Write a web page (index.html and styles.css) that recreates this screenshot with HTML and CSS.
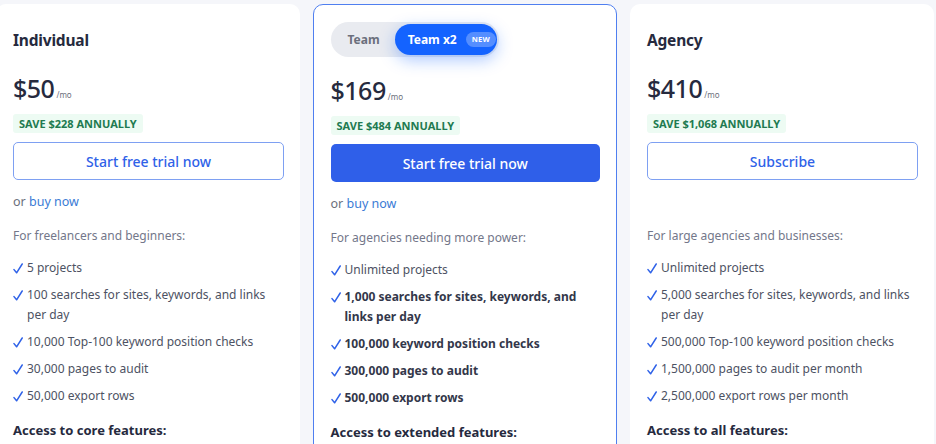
FILE: index.html
```html
<!DOCTYPE html>
<html>
<head>
<meta charset="utf-8">
<link rel="stylesheet" href="styles.css">
</head>
<body>
<div class="plans">
  <div class="card">
    <div class="head"><h2 class="title">Individual</h2></div>
    <div class="price"><span class="amount">$50</span><span class="per">/mo</span></div>
    <div class="save">SAVE $228 ANNUALLY</div>
    <a class="btn btn-outline">Start free trial now</a>
    <div class="or">or <a class="link">buy now</a></div>
    <p class="desc">For freelancers and beginners:</p>
    <ul class="list">
      <li><svg class="chk" viewBox="0 0 10 11"><path d="M1 6.6 L3.6 9.8 L9.2 1"/></svg><span>5 projects</span></li>
      <li><svg class="chk" viewBox="0 0 10 11"><path d="M1 6.6 L3.6 9.8 L9.2 1"/></svg><span>100 searches for sites, keywords, and links per day</span></li>
      <li><svg class="chk" viewBox="0 0 10 11"><path d="M1 6.6 L3.6 9.8 L9.2 1"/></svg><span>10,000 Top-100 keyword position checks</span></li>
      <li><svg class="chk" viewBox="0 0 10 11"><path d="M1 6.6 L3.6 9.8 L9.2 1"/></svg><span>30,000 pages to audit</span></li>
      <li><svg class="chk" viewBox="0 0 10 11"><path d="M1 6.6 L3.6 9.8 L9.2 1"/></svg><span>50,000 export rows</span></li>
    </ul>
    <div class="access">Access to core features:</div>
  </div>

  <div class="card card-featured">
    <div class="head">
      <div class="toggle">
        <span class="opt">Team</span>
        <span class="opt opt-active">Team x2 <span class="new">NEW</span></span>
      </div>
    </div>
    <div class="price"><span class="amount">$169</span><span class="per">/mo</span></div>
    <div class="save">SAVE $484 ANNUALLY</div>
    <a class="btn btn-solid">Start free trial now</a>
    <div class="or">or <a class="link">buy now</a></div>
    <p class="desc">For agencies needing more power:</p>
    <ul class="list">
      <li><svg class="chk" viewBox="0 0 10 11"><path d="M1 6.6 L3.6 9.8 L9.2 1"/></svg><span>Unlimited projects</span></li>
      <li class="strong"><svg class="chk" viewBox="0 0 10 11"><path d="M1 6.6 L3.6 9.8 L9.2 1"/></svg><span>1,000 searches for sites, keywords, and links per day</span></li>
      <li class="strong"><svg class="chk" viewBox="0 0 10 11"><path d="M1 6.6 L3.6 9.8 L9.2 1"/></svg><span>100,000 keyword position checks</span></li>
      <li class="strong"><svg class="chk" viewBox="0 0 10 11"><path d="M1 6.6 L3.6 9.8 L9.2 1"/></svg><span>300,000 pages to audit</span></li>
      <li class="strong"><svg class="chk" viewBox="0 0 10 11"><path d="M1 6.6 L3.6 9.8 L9.2 1"/></svg><span>500,000 export rows</span></li>
    </ul>
    <div class="access">Access to extended features:</div>
  </div>

  <div class="card">
    <div class="head"><h2 class="title">Agency</h2></div>
    <div class="price"><span class="amount">$410</span><span class="per">/mo</span></div>
    <div class="save">SAVE $1,068 ANNUALLY</div>
    <a class="btn btn-outline">Subscribe</a>
    <div class="or or-empty"></div>
    <p class="desc">For large agencies and businesses:</p>
    <ul class="list">
      <li><svg class="chk" viewBox="0 0 10 11"><path d="M1 6.6 L3.6 9.8 L9.2 1"/></svg><span>Unlimited projects</span></li>
      <li><svg class="chk" viewBox="0 0 10 11"><path d="M1 6.6 L3.6 9.8 L9.2 1"/></svg><span>5,000 searches for sites, keywords, and links per day</span></li>
      <li><svg class="chk" viewBox="0 0 10 11"><path d="M1 6.6 L3.6 9.8 L9.2 1"/></svg><span>500,000 Top-100 keyword position checks</span></li>
      <li><svg class="chk" viewBox="0 0 10 11"><path d="M1 6.6 L3.6 9.8 L9.2 1"/></svg><span>1,500,000 pages to audit per month</span></li>
      <li><svg class="chk" viewBox="0 0 10 11"><path d="M1 6.6 L3.6 9.8 L9.2 1"/></svg><span>2,500,000 export rows per month</span></li>
    </ul>
    <div class="access">Access to all features:</div>
  </div>
</div>
</body>
</html>
```

FILE: styles.css
```css
* { box-sizing: border-box; }
html, body { margin: 0; padding: 0; }
body {
  background: #f5f6fa;
  font-family: "Noto Sans", "Open Sans", sans-serif;
  color: #4b5060;
  width: 936px;
  height: 444px;
  overflow: hidden;
}
.plans {
  display: flex;
  gap: 13px;
  padding-top: 4px;
  margin-left: -4px;
}
.card {
  width: 304px;
  flex: none;
  background: #fff;
  border-radius: 10px;
  padding: 0 16px 0 17px;
  height: 460px;
}
.card-featured {
  border: 1.5px solid #4f7ff0;
  padding: 0 16px 0 16.5px;
}
.head {
  height: 67px;
  display: flex;
  align-items: center;
  padding-top: 4px;
}
.card-featured .head { padding-top: 0; height: 68px; }
.title {
  margin: 0;
  font-size: 15.5px;
  font-weight: 700;
  color: #262a3e;
  letter-spacing: -0.2px;
}
.toggle {
  display: flex;
  align-items: center;
  background: #e9ebf0;
  border-radius: 18px;
  height: 35px;
  width: 168px;
  padding: 2px;
}
.opt {
  font-size: 12px;
  font-weight: 700;
  color: #6b6f7c;
  padding: 0 15px 0 15px;
  white-space: nowrap;
}
.opt-active {
  background: #1463ff;
  color: #fff;
  border-radius: 16px;
  height: 31px;
  width: 106px;
  display: flex;
  align-items: center;
  gap: 9px;
  padding: 0 0 0 13px;
  margin-left: auto;
  box-shadow: 0 5px 16px rgba(20, 99, 255, 0.35);
}
.new {
  font-size: 7.5px;
  font-weight: 700;
  background: rgba(255, 255, 255, 0.28);
  border-radius: 8px;
  padding: 3px 6px;
  letter-spacing: 0.3px;
  line-height: 9px;
}
.price {
  display: flex;
  align-items: baseline;
  height: 40px;
}
.amount {
  font-size: 25px;
  font-weight: 500;
  color: #262a3e;
  letter-spacing: -0.5px;
}
.per {
  font-size: 8px;
  color: #6b6f7c;
  margin-left: 2px;
}
.save {
  display: inline-block;
  background: #edfbf3;
  color: #217a50;
  font-size: 11px;
  font-weight: 700;
  padding: 2px 6px;
  border-radius: 3px;
  line-height: 15px;
}
.btn {
  display: flex;
  align-items: center;
  justify-content: center;
  height: 38px;
  margin-top: 9px;
  border-radius: 5px;
  font-size: 14px;
  font-weight: 500;
}
.btn-outline {
  border: 1px solid #7ea0f2;
  color: #2f62e8;
  background: #fff;
}
.btn-solid {
  background: #2f5fe9;
  color: #fff;
}
.or {
  font-size: 12.5px;
  color: #6b6f7c;
  margin-top: 12px;
  height: 20px;
  line-height: 20px;
}
.link { color: #3a7bd5; }
.desc {
  margin: 14px 0 0;
  font-size: 12px;
  line-height: 20px;
  color: #73778a;
}
.list {
  list-style: none;
  margin: 12px 0 0;
  padding: 0;
  display: flex;
  flex-direction: column;
  gap: 7px;
}
.list li {
  display: flex;
  align-items: flex-start;
  font-size: 12px;
  line-height: 20px;
  color: #4d5263;
  padding-right: 8px;
}
.list li.strong {
  font-weight: 700;
  color: #33374a;
}
.chk {
  flex: none;
  width: 10px;
  height: 11px;
  margin: 5px 4px 0 0;
  fill: none;
  stroke: #2f62e8;
  stroke-width: 1.5;
  stroke-linecap: round;
  stroke-linejoin: round;
}
.access {
  margin-top: 15px;
  font-size: 13px;
  font-weight: 700;
  color: #262a3e;
}
```
